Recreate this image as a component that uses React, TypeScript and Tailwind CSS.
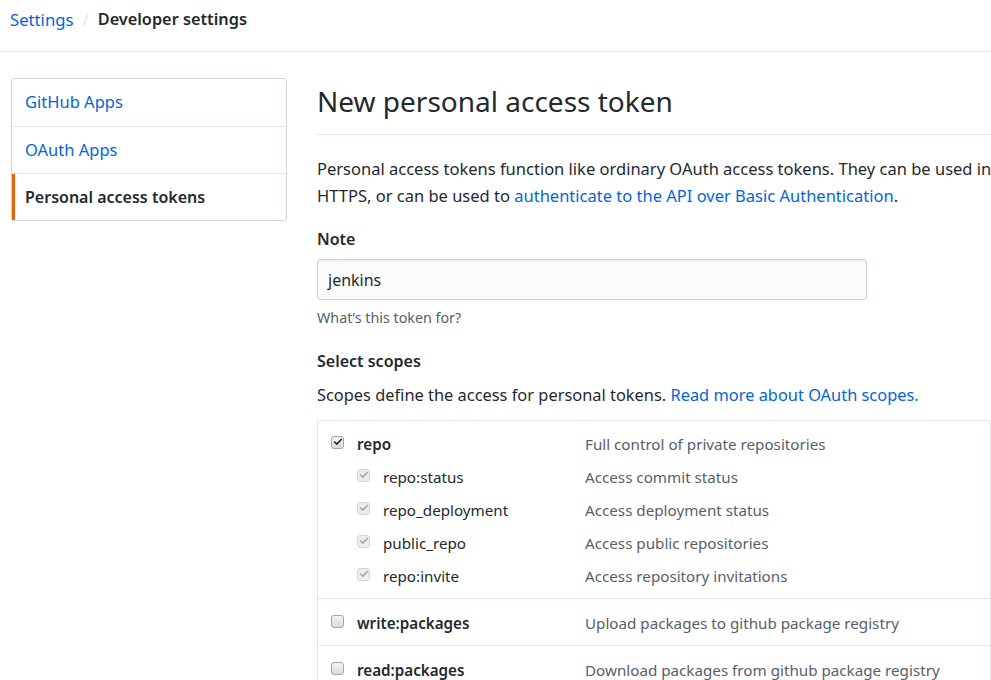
import { Check } from 'lucide-react';

const font = { fontFamily: '"Noto Sans", "Open Sans", sans-serif' };

type Scope = {
  name: string;
  description: string;
  checked: boolean;
  children?: { name: string; description: string }[];
};

const scopes: Scope[] = [
  {
    name: 'repo',
    description: 'Full control of private repositories',
    checked: true,
    children: [
      { name: 'repo:status', description: 'Access commit status' },
      { name: 'repo_deployment', description: 'Access deployment status' },
      { name: 'public_repo', description: 'Access public repositories' },
      { name: 'repo:invite', description: 'Access repository invitations' },
    ],
  },
  { name: 'write:packages', description: 'Upload packages to github package registry', checked: false },
  { name: 'read:packages', description: 'Download packages from github package registry', checked: false },
];

const Box = ({ checked, muted }: { checked: boolean; muted?: boolean }) => (
  <span
    className={`mb-1 flex h-[13px] w-[13px] shrink-0 items-center justify-center rounded-[3px] border ${
      muted
        ? 'border-[#d6d6d6] bg-[#ededed]'
        : 'border-[#a6a6a6] bg-gradient-to-b from-[#f6f6f6] to-[#d9d9d9]'
    }`}
  >
    {checked && (
      <Check size={10} strokeWidth={4} className={muted ? 'text-[#a9a9a9]' : 'text-[#2a2a2a]'} />
    )}
  </span>
);

export default function App() {
  return (
    <div className="h-[680px] w-[991px] overflow-hidden bg-white text-[#24292e]" style={font}>
      <div className="flex h-[52px] items-center gap-[9px] border-b border-[#e1e4e8] px-[10px] pb-[12px] text-[16.7px]">
        <span className="text-[#0366d6]">Settings</span>
        <span className="text-[#e1e4e8]">/</span>
        <span className="text-[16.3px] font-semibold">Developer settings</span>
      </div>

      <div className="flex gap-[30px] pl-[11px] pt-[26px]">
        <nav className="w-[276px] shrink-0 self-start rounded-[3px] border border-[#d1d5da] text-[16.5px]">
          <div className="flex h-[48px] items-center border-b border-[#e1e4e8] px-[13px] text-[#0366d6]">GitHub Apps</div>
          <div className="flex h-[47px] items-center border-b border-[#e1e4e8] px-[13px] text-[#0366d6]">OAuth Apps</div>
          <div className="flex h-[46px] items-center border-l-[3px] border-[#e36209] pl-[10px] text-[16px] font-semibold">
            Personal access tokens
          </div>
        </nav>

        <main className="min-w-0 flex-1">
          <h1 className="border-b border-[#e1e4e8] pb-[15px] pt-[5px] text-[28px] leading-[36px] font-normal">
            New personal access token
          </h1>
          <p className="mt-[20px] whitespace-nowrap text-[16.5px] leading-[27px]">
            Personal access tokens function like ordinary OAuth access tokens. They can be used instead of a password for Git over
            <br />
            HTTPS, or can be used to <span className="text-[#0366d6]">authenticate to the API over Basic Authentication</span>.
          </p>

          <div className="mt-[18px] text-[16px] font-semibold leading-[24px]">Note</div>
          <div className="mt-[8px] flex h-[41px] w-[550px] items-center rounded-[3px] border border-[#d1d5da] bg-[#fafbfc] px-[10px] text-[16px] shadow-[inset_0_1px_2px_rgba(27,31,35,0.075)]">
            jenkins
          </div>
          <div className="mt-[8px] text-[14.3px] leading-[20px] text-[#586069]">What’s this token for?</div>

          <div className="mt-[21px] text-[16px] font-semibold leading-[24px]">Select scopes</div>
          <p className="mt-[10px] text-[16.4px] leading-[24px]">
            Scopes define the access for personal tokens.{' '}
            <span className="text-[#0366d6]">Read more about OAuth scopes.</span>
          </p>

          <div className="mt-[13px] rounded-[3px] border border-[#e1e4e8] text-[15.2px]">
            {scopes.map((scope, i) => (
              <div
                key={scope.name}
                className={
                  i > 0
                    ? 'border-t border-[#e1e4e8] pb-[11px] pl-[13px] pt-[13px]'
                    : 'pb-[11px] pl-[13px] pt-[12px]'
                }
              >
                <div className="flex h-[22px] items-center">
                  <div className="flex w-[254px] items-center gap-[13px]">
                    <Box checked={scope.checked} />
                    <span className="font-semibold">{scope.name}</span>
                  </div>
                  <span className="text-[#586069]">{scope.description}</span>
                </div>
                {scope.children?.map((child) => (
                  <div key={child.name} className="mt-[11px] flex h-[22px] items-center">
                    <div className="flex w-[254px] items-center gap-[13px] pl-[26px]">
                      <Box checked muted />
                      <span>{child.name}</span>
                    </div>
                    <span className="text-[#586069]">{child.description}</span>
                  </div>
                ))}
              </div>
            ))}
          </div>
        </main>
      </div>
    </div>
  );
}
